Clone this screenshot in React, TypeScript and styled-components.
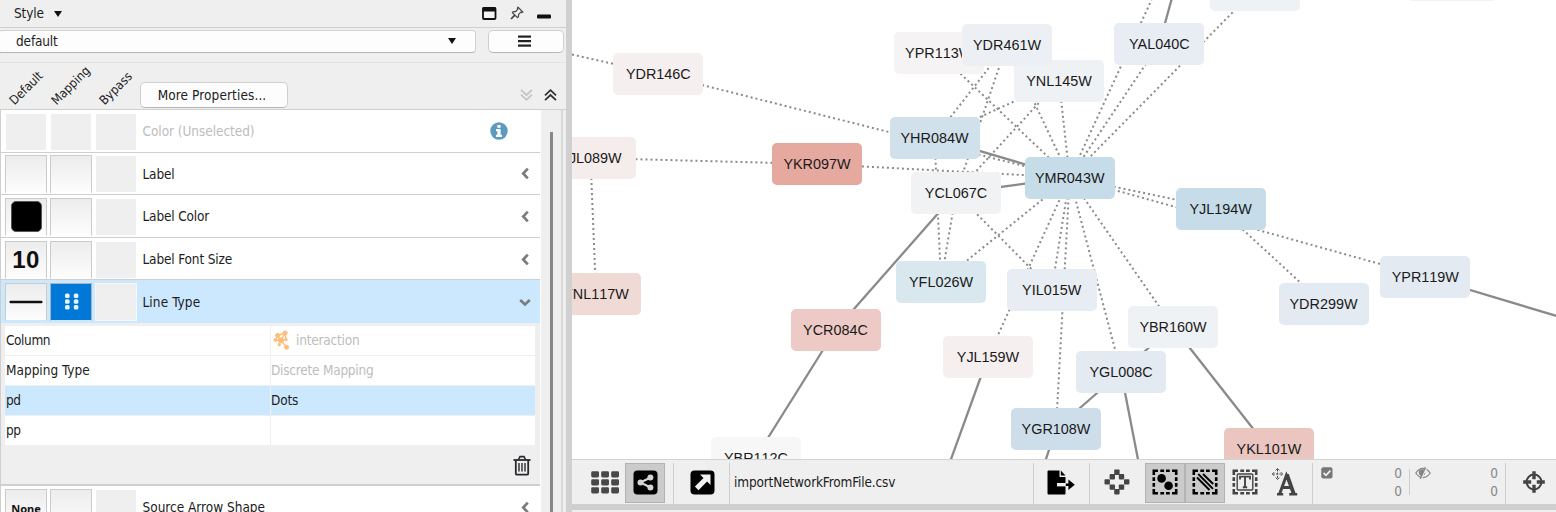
import React from "react";
import styled, { createGlobalStyle } from "styled-components";

const UI_FONT = `"DejaVu Sans Condensed", "DejaVu Sans", "Noto Sans", sans-serif`;

const GlobalStyle = createGlobalStyle`
  * { box-sizing: border-box; }
  html, body { margin: 0; padding: 0; overflow: hidden; }
  body { font-family: ${UI_FONT}; font-stretch: condensed; font-size: 13.5px; color: #1c1c22; }
`;

const Window = styled.div`
  display: flex;
  width: 1556px;
  height: 512px;
  overflow: hidden;
  background: #efefef;
`;

const StylePanel = styled.aside`
  display: flex;
  flex-direction: column;
  width: 566px;
  height: 512px;
  flex: none;
  background: #efefef;
`;

const Splitter = styled.div`
  width: 6px;
  flex: none;
  background: #d0d0d0;
`;

const Label = styled.span<{ $spacing?: number; $tone?: string }>`
  white-space: nowrap;
  line-height: 16px;
  letter-spacing: ${(p) => p.$spacing ?? -0.15}px;
  color: ${(p) => p.$tone ?? "inherit"};
`;

const TitleBar = styled.header`
  display: flex;
  align-items: center;
  height: 28px;
  flex: none;
  padding: 0 15px 1px 14px;
  border-bottom: 1px solid #cfcfcf;
`;

const TitleTools = styled.div`
  display: flex;
  align-items: center;
  gap: 13px;
  margin-left: auto;
`;

const Caret = styled.span`
  width: 0;
  height: 0;
  border-left: 4px solid transparent;
  border-right: 4px solid transparent;
  border-top: 6px solid #111;
`;

const PickerRow = styled.div`
  display: flex;
  gap: 12px;
  height: 35px;
  flex: none;
  padding: 2px 2px 0 0;
  border-bottom: 1px solid #e2e2e2;
`;

const Combo = styled.div`
  display: flex;
  align-items: center;
  justify-content: space-between;
  width: 478px;
  height: 23px;
  margin-left: -2px;
  padding: 0 19px 1px 17px;
  background: #fdfdfd;
  border: 1px solid #d2d2d2;
  border-bottom-color: #b5b5b5;
  border-radius: 4px;
`;

const PushButton = styled.button<{ $w: number; $h: number }>`
  display: flex;
  align-items: center;
  justify-content: center;
  width: ${(p) => p.$w}px;
  height: ${(p) => p.$h}px;
  padding: 0 4px 1px 0;
  color: inherit;
  font: inherit;
  background: #fdfdfd;
  border: 1px solid #d0d0d0;
  border-bottom-color: #b5b5b5;
  border-radius: 5px;
`;

const ColumnHeader = styled.div`
  display: flex;
  height: 47px;
  flex: none;
  padding-right: 9px;
  border-bottom: 1px solid #cfcfcf;
`;

const SlantedHeads = styled.div`
  display: flex;
  width: 140px;
  height: 44px;
  align-items: flex-end;
`;

const Slanted = styled.span<{ $w: number; $indent: number }>`
  width: ${(p) => p.$w}px;
  padding-left: ${(p) => p.$indent}px;
  height: 12px;
  font-size: 12.5px;
  line-height: 12px;
  white-space: nowrap;

  span {
    display: inline-block;
    transform: rotate(-45deg);
    transform-origin: 0 100%;
  }
`;

const HeaderButtonArea = styled.div`
  padding-top: 19px;
`;

const Chevrons = styled.div`
  display: flex;
  gap: 11px;
  align-items: center;
  margin: 18px 0 0 auto;
`;

const ListArea = styled.div`
  display: flex;
  flex: 1;
  min-height: 0;
  width: 563px;
  border-left: 1px solid #cfcfcf;
  border-right: 2px solid #d8d8d8;
`;

const List = styled.div`
  width: 539px;
  flex: none;
  overflow: hidden;
`;

const ScrollTrack = styled.div`
  flex: 1;
  padding: 22px 0 0 9px;
  border-left: 1px solid #fff;
  background: #efefef;
`;

const ScrollThumb = styled.div`
  width: 2.5px;
  height: 100%;
  background: #888;
`;

const PropertyRow = styled.div<{ $active?: boolean }>`
  display: flex;
  align-items: center;
  height: 42.6px;
  padding: 0 9px 0 4px;
  background: ${(p) => (p.$active ? "#cce8ff" : "#fff")};
  border-bottom: 1px solid ${(p) => (p.$active ? "#cce8ff" : "#cfcfcf")};
`;

const CellButton = styled.div<{ $kind: "button" | "flat" | "picked" | "bypass" }>`
  display: flex;
  align-items: center;
  justify-content: center;
  width: 42px;
  height: 38px;
  margin: 2px 3px 0 0;
  flex: none;
  font: bold 24px "Liberation Sans", Arial, sans-serif;
  letter-spacing: 0.4px;
  color: #111;
  border: 1px solid ${(p) => (p.$kind === "button" ? "#cbcbcb" : p.$kind === "picked" ? "#a9b4bc" : "transparent")};
  border-bottom-color: transparent;
  background: ${(p) =>
    p.$kind === "button"
      ? "linear-gradient(#ececec, #fdfdfd)"
      : p.$kind === "picked"
        ? "#0078d7"
        : "#efefef"};
  background-clip: padding-box;
  outline: ${(p) => (p.$kind === "bypass" ? "1px solid #f4f8fc" : "none")};
  outline-offset: -1px;
`;

const SmallValue = styled.span`
  padding-top: 2px;
  font: bold 11px "Noto Sans", sans-serif;
  letter-spacing: 0;
`;

const ColorSwatch = styled.div`
  width: 31px;
  height: 31px;
  border-radius: 5px;
  border: 1px solid #555;
  background: #000;
`;

const PropertyName = styled.div`
  flex: 1;
  padding: 1px 0 0 2.5px;
`;

const MappingEditor = styled.div`
  height: 163px;
  padding: 3px 5px 0 4px;
  background: #efefef;
  border-bottom: 2px solid #cfcfcf;
`;

const MappingLine = styled.div<{ $active?: boolean }>`
  display: grid;
  grid-template-columns: 265px 264px;
  gap: 1px;
  height: 30px;
  padding-bottom: 1px;

  & > div {
    display: flex;
    align-items: center;
    padding-left: 1px;
    background: ${(p) => (p.$active ? "#cce8ff" : "#fff")};
  }

  & > div + div {
    padding-left: 0;
  }
`;

const EditorFooter = styled.div`
  display: flex;
  justify-content: flex-end;
  padding: 9px 4px 0 0;
`;

const NetworkPane = styled.main`
  display: flex;
  flex-direction: column;
  flex: 1;
  min-width: 0;
`;

const Canvas = styled.section`
  position: relative;
  height: 459px;
  flex: none;
  overflow: hidden;
  background: #fff;
`;

const EdgeLayer = styled.svg`
  position: absolute;
  inset: 0;
  width: 984px;
  height: 459px;
`;

const NodeBox = styled.div<{ $x: number; $y: number; $fill: string; $kern: boolean }>`
  position: absolute;
  left: ${(p) => p.$x - 572 - 45}px;
  top: ${(p) => p.$y - 21}px;
  display: flex;
  align-items: center;
  justify-content: center;
  width: 90px;
  height: 42px;
  border-radius: 5px;
  background: ${(p) => p.$fill};
  color: #1a1a1a;
  font: 14.4px "Liberation Sans", Arial, sans-serif;
  font-kerning: ${(p) => (p.$kern ? "normal" : "none")};
`;

const Toolbar = styled.footer`
  display: flex;
  align-items: flex-start;
  height: 45px;
  flex: none;
  padding-top: 3px;
  border-top: 1px solid #d3d3d3;
  background: #efefef;
`;

const Slot = styled.div<{ $w: number; $pad?: number }>`
  display: flex;
  align-items: center;
  width: ${(p) => p.$w}px;
  height: 38px;
  padding-left: ${(p) => p.$pad ?? 0}px;
  flex: none;
`;

const Toggle = styled.div`
  display: flex;
  align-items: center;
  justify-content: center;
  width: 40px;
  height: 40px;
  padding-bottom: 2px;
  flex: none;
  background: #cbcbcb;
  border: 1px solid #b3b3b3;
`;

const Rule = styled.div<{ $h?: number }>`
  width: 1px;
  height: ${(p) => p.$h ?? 41}px;
  flex: none;
  margin-top: ${(p) => (p.$h ? 6 : 0)}px;
  background: #cecece;
`;

const CountBlock = styled.div<{ $w: number; $pad: number }>`
  display: flex;
  justify-content: space-between;
  width: ${(p) => p.$w}px;
  height: 40px;
  padding: 4px 7px 0 ${(p) => p.$pad}px;
  flex: none;
`;

const Counts = styled.div`
  display: flex;
  flex-direction: column;
  color: #858585;
  font-size: 13.5px;
  line-height: 17.5px;
  margin-top: -2px;
`;

const BottomSash = styled.div`
  height: 6px;
  flex: none;
  background: #cfcfcf;
`;

type Edge = [number, number, number, number];

const dotted: Edge[] = [
  [572, 54.5, 658, 74],
  [658.5, 74, 1069.7, 177.5],
  [590.5, 158, 817, 164],
  [817, 164, 1069.7, 177.5],
  [590.5, 158, 596, 294],
  [1007, 44.5, 934.5, 137.7],
  [1007, 44.5, 956, 193],
  [1007, 44.5, 1069.7, 177.5],
  [938.7, 53, 1069.7, 177.5],
  [1059, 81, 934.5, 137.7],
  [1059, 81, 956, 193],
  [1059, 81, 1069.7, 177.5],
  [934.5, 137.7, 941, 281.5],
  [956, 193, 941, 281.5],
  [956, 193, 1051.7, 289.5],
  [1069.7, 177.5, 941, 281.5],
  [1069.7, 177.5, 988, 357],
  [1069.7, 177.5, 1051.7, 289.5],
  [1069.7, 177.5, 1056, 429],
  [1069.7, 177.5, 1121, 372],
  [1069.7, 177.5, 1173, 326.5],
  [1069.7, 177.5, 1220.6, 209],
  [1069.7, 177.5, 1425, 276.5],
  [1069.7, 177.5, 1151.5, 0],
  [1069.7, 177.5, 1159.3, 44],
  [1069.7, 177.5, 1254.7, -10],
  [1220.6, 209, 1323, 303.5],
];

const solid: Edge[] = [
  [934.5, 137.7, 1069.7, 177.5],
  [956, 193, 1069.7, 177.5],
  [956, 193, 835.5, 330],
  [835.5, 330, 756, 457],
  [1425, 276.5, 1560, 317],
  [1173, 326.5, 1056, 429],
  [1173, 326.5, 1269, 449],
  [988, 357, 950, 462],
  [1056, 429, 1045, 462],
  [1121, 372, 1138.5, 462],
  [1159.3, 44, 1172.5, -4],
];

const nodes: [string, number, number, string][] = [
  ["YDR146C", 658.3, 74, "#f5efef"],
  ["YKR097W", 817, 164, "#e6a9a0"],
  ["YJL089W", 590.5, 158.3, "#f5ecec"],
  ["YNL117W", 596, 294, "#f0dad6"],
  ["YPR113W", 938.7, 53, "#f6f3f5"],
  ["YNL145W", 1059, 81.3, "#eff2f5"],
  ["YDR461W", 1007, 44.5, "#ecf0f4"],
  ["YHR084W", 934.5, 137.7, "#d0e1eb"],
  ["YCL067C", 956, 193, "#f1f2f4"],
  ["YMR043W", 1069.7, 177.5, "#c6dce8"],
  ["YAL040C", 1159.3, 44, "#e8ecf3"],
  ["", 1254.7, -10, "#eff2f5"],
  ["", 1452, -20.5, "#f0f3f5"],
  ["YJL194W", 1220.6, 209.3, "#c6dce8"],
  ["YFL026W", 941, 281.5, "#d9e7ee"],
  ["YIL015W", 1051.7, 289.5, "#e8ecf3"],
  ["YBR160W", 1173, 326.5, "#eff2f5"],
  ["YJL159W", 988, 357, "#f5efef"],
  ["YGL008C", 1121, 372, "#e3eaf1"],
  ["YGR108W", 1056, 429, "#cddeea"],
  ["YKL101W", 1269, 449, "#ebc6c1"],
  ["YCR084C", 835.5, 330, "#edcac5"],
  ["YBR112C", 756, 457.5, "#f7f7f7"],
  ["YPR119W", 1425.3, 276.5, "#e3eaf1"],
  ["YDR299W", 1323.5, 303.5, "#e3eaf1"],
];

const FloatIcon = () => (
  <svg width="15" height="13" viewBox="0 0 15 13">
    <rect x="1" y="1" width="12.5" height="11" rx="1" fill="#f4f4f4" stroke="#111" strokeWidth="1.8" />
    <rect x="0.5" y="0.5" width="13.5" height="4" fill="#111" />
  </svg>
);

const PinIcon = () => (
  <svg width="14" height="14" viewBox="0 0 14 14" fill="none" stroke="#444" strokeWidth="1.2">
    <path d="M8 1.2 12.8 6 11.5 6.6 10.8 6.2 8.6 8.4 8.4 11 7.4 11.6 2.4 6.6 3.2 5.6 5.6 5.6 7.8 3.2 7.4 2.2Z" />
    <path d="M4.8 9.2 1 13" strokeWidth="1.7" />
  </svg>
);

const MinimizeIcon = () => (
  <svg width="14" height="14" viewBox="0 0 14 14">
    <rect x="0" y="8.5" width="14" height="4" rx="1" fill="#111" />
  </svg>
);

const MenuIcon = () => (
  <svg width="14" height="12" viewBox="0 0 14 12" fill="#222">
    <rect x="1" y="0.5" width="13" height="2.2" />
    <rect x="1" y="5" width="13" height="2.2" />
    <rect x="1" y="9.5" width="13" height="2.2" />
  </svg>
);

const DoubleChevron = ({ up, color }: { up?: boolean; color: string }) => (
  <svg width="13" height="12" viewBox="0 0 13 12" fill="none" stroke={color} strokeWidth="1.8">
    {up ? <path d="M1 6.4 6.5 1.2 12 6.4M1 11.2 6.5 6 12 11.2" /> : <path d="M1 0.8 6.5 6 12 0.8M1 5.6 6.5 10.8 12 5.6" />}
  </svg>
);

const InfoIcon = () => (
  <svg width="18" height="18" viewBox="0 0 18 18">
    <circle cx="9" cy="9" r="8.7" fill="#5d9abf" />
    <path d="M7.4 3h3.2v2.7H7.4zM6 7h4.6v5.8H12V15H6v-2.2h1.4V9.2H6z" fill="#fff" />
  </svg>
);

const RowChevron = ({ open }: { open?: boolean }) => (
  <svg width="12" height="12" viewBox="0 0 12 12" fill="none" stroke="#7c7c7c" strokeWidth="2.7">
    {open ? <path d="M1.2 5 6 9.4 10.8 5" /> : <path d="M8.8 1.6 4.2 6.5 8.8 11.4" />}
  </svg>
);

const DiscreteIcon = () => (
  <svg width="15" height="18" viewBox="0 0 15 18" fill="#e8f3fc">
    {[1, 6.7, 12.4].map((y) => (
      <React.Fragment key={y}>
        <rect x="1" y={y - 0.5} width="4.6" height="4.6" rx="1.6" />
        <rect x="9.8" y={y - 0.5} width="4.6" height="4.6" rx="1.6" />
      </React.Fragment>
    ))}
  </svg>
);

const SolidLineIcon = () => (
  <svg width="34" height="4" viewBox="0 0 34 4">
    <rect x="0.5" y="0.7" width="33" height="2.6" rx="1" fill="#111" />
  </svg>
);

const InteractionIcon = () => (
  <svg width="17" height="20" viewBox="0 0 17 20" fill="#ffbd7a" stroke="#ffbd7a">
    <path d="M4.5 5.5 12 3M12 3 8 10.5M4.5 5.5 8 10.5M8 10.5 2.5 10M8 10.5 6.5 14.5M8 10.5 13.5 17M12 3 13 9.5M2.5 10 4.5 5.5M8 10.5 13 9.5" fill="none" strokeWidth="1.4" />
    <circle cx="4.6" cy="5.4" r="2" />
    <circle cx="12.2" cy="2.9" r="2" />
    <circle cx="2.3" cy="10" r="1.4" />
    <circle cx="8" cy="10.3" r="2.6" />
    <circle cx="13" cy="9.6" r="1.2" />
    <circle cx="6.3" cy="14.7" r="1.2" />
    <circle cx="13.6" cy="17.2" r="2" />
  </svg>
);

const TrashIcon = () => (
  <svg width="18" height="21" viewBox="0 0 18 21" fill="none" stroke="#2a2a2e">
    <path d="M0.5 5h17" strokeWidth="1.8" />
    <path d="M5.5 4.5 7 1.6h4l1.5 2.9" strokeWidth="1.6" />
    <path d="M2.8 5v13.4q0 1.3 1.3 1.3h9.8q1.3 0 1.3-1.3V5" strokeWidth="1.8" />
    <path d="M6 8v8.6M9 8v8.6M12 8v8.6" strokeWidth="1.4" />
  </svg>
);

const GridIcon = () => (
  <svg width="28" height="23" viewBox="0 0 28 23" fill="#484848">
    {[0, 8, 16].map((y) => [0, 10, 20].map((x) => <rect key={`${x}-${y}`} x={x + 0.2} y={y + 0.3} width="7.8" height="6.2" rx="1.4" />))}
  </svg>
);

const ShareIcon = () => (
  <svg width="25" height="25" viewBox="0 0 25 25">
    <rect x="0.5" y="0.5" width="24" height="24" rx="4" fill="#000" />
    <path d="M17.5 7.4 7.5 12.5 17.5 17.6" fill="none" stroke="#d4d4d4" strokeWidth="2.2" />
    <g fill="#d4d4d4">
      <circle cx="17.4" cy="7.5" r="3" />
      <circle cx="7.5" cy="12.5" r="3" />
      <circle cx="17.4" cy="17.5" r="3" />
    </g>
  </svg>
);

const DetachIcon = () => (
  <svg width="25" height="25" viewBox="0 0 25 25">
    <rect x="0.5" y="0.5" width="24" height="24" rx="4" fill="#000" />
    <path d="M10 4.5h10.5V15l-3.4-3.4-8.6 8.6-3.6-3.6 8.6-8.6z" fill="#f2f2f2" />
  </svg>
);

const ExportIcon = () => (
  <svg width="28" height="25" viewBox="0 0 28 25">
    <path d="M1.5 0.5h11v6.5h6v16.8q0 .7-.7.7H1.5q-1 0-1-1v-22q0-1 1-1z" fill="#000" />
    <path d="M13.8 0.5 18.5 5.4H13.8z" fill="#000" />
    <path d="M10 13h9.5v3.4H10z" fill="#efefef" />
    <path d="M18.8 13.4h2.6V9.6l6.4 5.2-6.4 5.2v-4h-2.6z" fill="#000" />
  </svg>
);

const FitIcon = () => (
  <svg width="26" height="26" viewBox="0 0 26 26" fill="#444">
    {[[10.2, 0.5], [5.6, 5], [14.8, 5], [0.5, 10.2], [20, 10.2], [5.6, 15.4], [14.8, 15.4], [10.2, 20]].map(([x, y]) => (
      <rect key={`${x}-${y}`} x={x} y={y} width="5.4" height="5.4" rx="0.8" />
    ))}
  </svg>
);

const DashedFrame = ({ color }: { color: string }) => (
  <g fill="none" stroke={color} strokeWidth="2.6">
    <path d="M1.8 6V1.8H6M20 1.8h4.2V6M24.2 20v4.2H20M6 24.2H1.8V20" />
    <path d="M8.3 1.8h3.8M14 1.8h3.8M8.3 24.2h3.8M14 24.2h3.8M1.8 8.3v3.8M1.8 14v3.8M24.2 8.3v3.8M24.2 14v3.8" />
  </g>
);

const SelectNodesIcon = () => (
  <svg width="26" height="26" viewBox="0 0 26 26">
    <DashedFrame color="#000" />
    <circle cx="9.6" cy="9.4" r="4.3" fill="#000" />
    <circle cx="16.6" cy="16.8" r="4.3" fill="#000" />
  </svg>
);

const SelectEdgesIcon = () => (
  <svg width="26" height="26" viewBox="0 0 26 26">
    <DashedFrame color="#000" />
    <path d="M5 8.5 17.5 21M6.2 5 21 19.8M11 5l10.2 10" stroke="#000" strokeWidth="1.9" fill="none" />
  </svg>
);

const SelectTextIcon = () => (
  <svg width="26" height="26" viewBox="0 0 26 26">
    <DashedFrame color="#444" />
    <rect x="5.2" y="5" width="15.6" height="16" rx="1" fill="none" stroke="#444" strokeWidth="1.4" />
    <path d="M8 10.5V7.6h10v2.9M13 7.6v10.6M10.8 18.3h4.4" stroke="#444" strokeWidth="1.9" fill="none" />
  </svg>
);

const MoveLabelIcon = () => (
  <svg width="27" height="28" viewBox="0 0 27 28">
    <g stroke="#555" strokeWidth="1.1" fill="none" strokeDasharray="2.4 1">
      <path d="M5.5 1v10M0.5 6h10" />
    </g>
    <path d="M3.6 2.4 5.5.5 7.4 2.4M3.6 9.6l1.9 1.9 1.9-1.9M2.2 4.1.3 6l1.9 1.9M8.8 4.1 10.7 6 8.8 7.9" stroke="#555" fill="none" />
    <path d="M5 26.2h6.2M17.2 26.2h8" stroke="#444" strokeWidth="2.4" />
    <path d="M7.6 26 14.4 7.4 21.8 26M10 19.6h9.4" stroke="#444" strokeWidth="3" fill="none" />
    <path d="M14.2 6h2.6L23.8 26h-4.2z" fill="#444" />
  </svg>
);

const CheckedIcon = () => (
  <svg width="12" height="12" viewBox="0 0 12 12">
    <rect x="0.3" y="0.3" width="11.2" height="11.2" rx="2" fill="#777" />
    <path d="M2.6 6 5 8.3 9.4 3.6" stroke="#efefef" strokeWidth="1.8" fill="none" />
  </svg>
);

const HiddenIcon = () => (
  <svg width="16" height="12" viewBox="0 0 16 12" fill="none" stroke="#858585">
    <path d="M.8 6Q4 1.4 8 1.4T15.2 6Q12 10.6 8 10.6T.8 6z" strokeWidth="1.2" />
    <circle cx="7" cy="5.5" r="3.2" fill="#858585" stroke="none" />
    <path d="M11.6.5 6.4 11.5" stroke="#efefef" strokeWidth="1.4" />
    <path d="M10.4.3 5.2 11.8" strokeWidth="1.4" />
  </svg>
);

const CrosshairIcon = () => (
  <svg width="22" height="22" viewBox="0 0 22 22" fill="none" stroke="#444">
    <circle cx="11" cy="11" r="7.4" strokeWidth="2" />
    <path d="M11 .2v8M11 13.8v8M.2 11h8M13.8 11h8" strokeWidth="3.4" />
  </svg>
);

const InfoHolder = styled.div`
  display: flex;
  margin-right: 23px;
`;

const TitleCaret = styled.div`
  padding: 2px 0 0 10px;
`;

const ColumnChoice = styled.div`
  display: flex;
  gap: 6px;
  align-items: center;
  padding-left: 2px;
`;

type RowProps = { name: string; spacing?: number; first?: React.ReactNode; disabled?: boolean; active?: boolean };

const Property = ({ name, spacing, first, disabled, active }: RowProps) => (
  <PropertyRow $active={active}>
    <CellButton $kind={disabled ? "flat" : "button"}>{first}</CellButton>
    <CellButton $kind={disabled ? "flat" : active ? "picked" : "button"}>{active && <DiscreteIcon />}</CellButton>
    <CellButton $kind={active ? "bypass" : "flat"} />
    <PropertyName>
      <Label $spacing={spacing} $tone={disabled ? "#bdbdbd" : undefined}>{name}</Label>
    </PropertyName>
    {disabled ? <InfoHolder><InfoIcon /></InfoHolder> : <RowChevron open={active} />}
  </PropertyRow>
);

export default function App() {
  return (
    <Window>
      <GlobalStyle />
      <StylePanel>
        <TitleBar>
          <Label>Style</Label>
          <TitleCaret><Caret as="div" /></TitleCaret>
          <TitleTools>
            <FloatIcon />
            <PinIcon />
            <MinimizeIcon />
          </TitleTools>
        </TitleBar>
        <PickerRow>
          <Combo>
            <Label>default</Label>
            <Caret />
          </Combo>
          <PushButton $w={76} $h={23}><MenuIcon /></PushButton>
        </PickerRow>
        <ColumnHeader>
          <SlantedHeads>
            <Slanted $w={41} $indent={16}><span>Default</span></Slanted>
            <Slanted $w={49} $indent={17}><span>Mapping</span></Slanted>
            <Slanted $w={50} $indent={16}><span>Bypass</span></Slanted>
          </SlantedHeads>
          <HeaderButtonArea>
            <PushButton $w={148} $h={26}><Label $spacing={0.1}>More Properties...</Label></PushButton>
          </HeaderButtonArea>
          <Chevrons>
            <DoubleChevron color="#c4c4c4" />
            <DoubleChevron up color="#333" />
          </Chevrons>
        </ColumnHeader>
        <ListArea>
          <List>
            <Property name="Color (Unselected)" spacing={-0.05} disabled />
            <Property name="Label" />
            <Property name="Label Color" first={<ColorSwatch />} />
            <Property name="Label Font Size" first="10" />
            <Property name="Line Type" spacing={0.1} first={<SolidLineIcon />} active />
            <MappingEditor>
              <MappingLine>
                <div><Label $spacing={-0.4}>Column</Label></div>
                <div><ColumnChoice><InteractionIcon /><Label $spacing={-0.2} $tone="#bdbdbd">interaction</Label></ColumnChoice></div>
              </MappingLine>
              <MappingLine>
                <div><Label $spacing={0}>Mapping Type</Label></div>
                <div><Label $spacing={-0.23} $tone="#bdbdbd">Discrete Mapping</Label></div>
              </MappingLine>
              <MappingLine $active>
                <div><Label $spacing={-0.5}>pd</Label></div>
                <div><Label>Dots</Label></div>
              </MappingLine>
              <MappingLine>
                <div><Label $spacing={-0.5}>pp</Label></div>
                <div />
              </MappingLine>
              <EditorFooter><TrashIcon /></EditorFooter>
            </MappingEditor>
            <Property name="Source Arrow Shape" spacing={0} first={<SmallValue>None</SmallValue>} />
          </List>
          <ScrollTrack><ScrollThumb /></ScrollTrack>
        </ListArea>
      </StylePanel>
      <Splitter />
      <NetworkPane>
        <Canvas>
          <EdgeLayer viewBox="572 0 984 459" fill="none" stroke="#8a8a8a">
            <g strokeWidth="2" strokeDasharray="2 3">
              {dotted.map(([a, b, c, d], i) => <line key={i} x1={a} y1={b} x2={c} y2={d} />)}
            </g>
            <g strokeWidth="2.3">
              {solid.map(([a, b, c, d], i) => <line key={i} x1={a} y1={b} x2={c} y2={d} />)}
            </g>
          </EdgeLayer>
          {nodes.map(([name, x, y, fill], i) => (
            <NodeBox key={i} $x={x} $y={y} $fill={fill} $kern={!name.includes("11")}>{name}</NodeBox>
          ))}
        </Canvas>
        <Toolbar>
          <Slot $w={53} $pad={18.5}><GridIcon /></Slot>
          <Toggle><ShareIcon /></Toggle>
          <Slot $w={8} />
          <Rule />
          <Slot $w={55} $pad={15.5}><DetachIcon /></Slot>
          <Rule />
          <Slot $w={303} $pad={4}><Label>importNetworkFromFile.csv</Label></Slot>
          <Rule />
          <Slot $w={55} $pad={12.5}><ExportIcon /></Slot>
          <Rule />
          <Slot $w={55} $pad={14}><FitIcon /></Slot>
          <Toggle><SelectNodesIcon /></Toggle>
          <Toggle><SelectEdgesIcon /></Toggle>
          <Slot $w={40} $pad={7}><SelectTextIcon /></Slot>
          <Slot $w={47} $pad={7}><MoveLabelIcon /></Slot>
          <Rule />
          <CountBlock $w={96} $pad={8}>
            <CheckedIcon />
            <Counts><span>0</span><span>0</span></Counts>
          </CountBlock>
          <Rule $h={26} />
          <CountBlock $w={95} $pad={5}>
            <HiddenIcon />
            <Counts><span>0</span><span>0</span></Counts>
          </CountBlock>
          <Rule />
          <Slot $w={50} $pad={17}><CrosshairIcon /></Slot>
        </Toolbar>
        <BottomSash />
      </NetworkPane>
    </Window>
  );
}
